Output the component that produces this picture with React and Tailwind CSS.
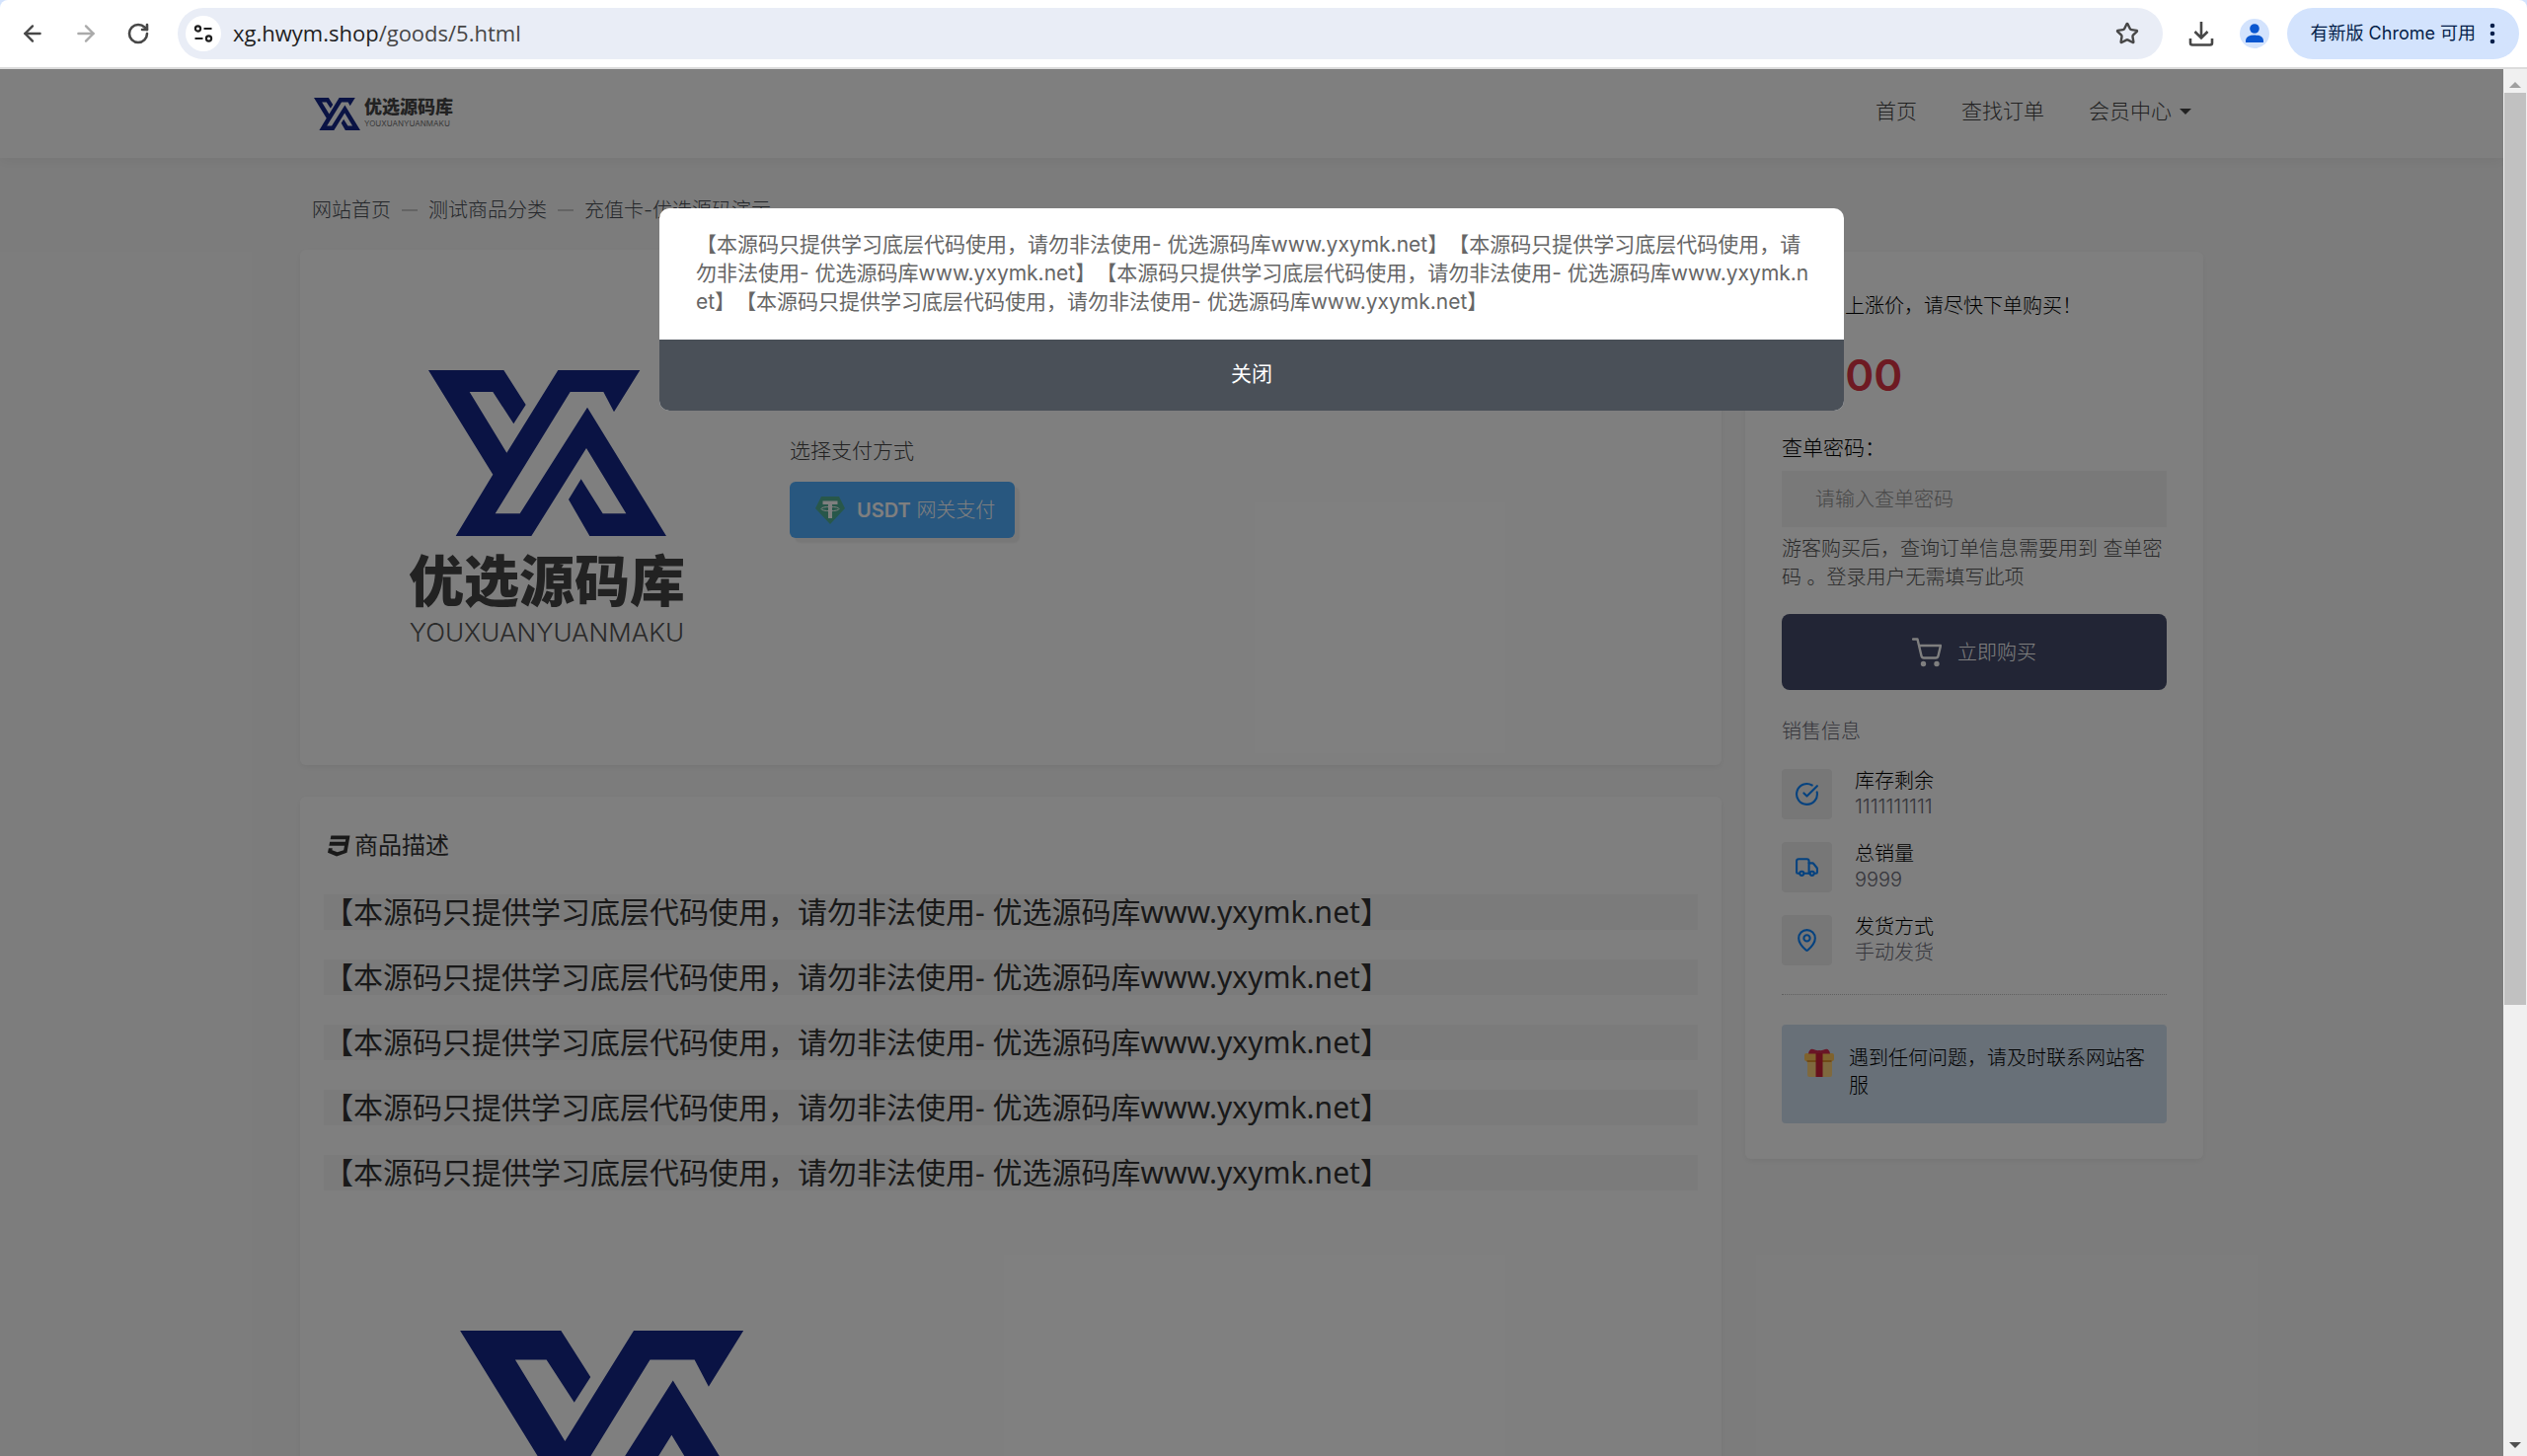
import React, { useState } from 'react';
import { ArrowLeft, ArrowRight, RotateCw, Star, MapPin, Truck, CircleCheckBig } from 'lucide-react';
import { FaCss3 } from 'react-icons/fa';

const NOTICE = '【本源码只提供学习底层代码使用，请勿非法使用- 优选源码库www.yxymk.net】';

const SALES = [
    { title: '库存剩余', value: '1111111111', icon: CircleCheckBig },
    { title: '总销量', value: '9999', icon: Truck },
    { title: '发货方式', value: '手动发货', icon: MapPin },
];

const LogoMark = ({ className }) => (
    <svg viewBox="0 0 723 504" className={className} fill="#142688" aria-hidden="true">
        <path d="M0 0H229L296 105L259 163L196 66H125L238 251L394 0H643L564 127L532 66H431L203 436H278L483 113L723 504H490L426 393L464 331L530 436H601L480 237L313 504H83L196 317Z" />
    </svg>
);

const TetherIcon = () => (
    <svg viewBox="0 0 30 28" className="w-[30px] h-7" aria-hidden="true">
        <path d="M6 0H24L30 12L15 28L0 12Z" fill="#50af95" />
        <path d="M7.500 4.500H22.500V8H17V22H13V8H7.500Z" fill="#fff" />
        <ellipse cx="15" cy="12.500" rx="9" ry="2.200" fill="none" stroke="#fff" strokeWidth="1" />
    </svg>
);

const CartIcon = () => (
    <svg viewBox="0 0 30 30" className="w-[30px] h-[30px]" fill="none" stroke="currentColor" strokeWidth="2.400" strokeLinecap="round" strokeLinejoin="round" aria-hidden="true">
        <path d="M1 1.500H5.500L9.500 18.500Q10 20.500 12 20.500H24Q26 20.500 26.500 18.500L29 8H7" />
        <circle cx="11.500" cy="26.500" r="1.500" fill="currentColor" />
        <circle cx="25" cy="26.500" r="1.500" fill="currentColor" />
    </svg>
);

const GiftIcon = () => (
    <svg viewBox="0 0 30 30" className="w-[30px] h-[30px] shrink-0 mt-1" aria-hidden="true">
        <rect x="3" y="12" width="25" height="17" rx="2" fill="#ffd37c" />
        <rect x="0" y="5" width="30" height="8" rx="2" fill="#ffc45a" />
        <path d="M2.500 12H27.500V14H2.500Z" fill="#e0962f" />
        <path d="M4 5.500Q5 0 9 1Q12 2.500 15 2Q18 2.500 21 1Q25 0 26 5.500Z" fill="#d32a4c" />
        <rect x="11.500" y="5" width="7" height="24" fill="#cf2038" />
    </svg>
);

const BrowserBar = () => (
    <div className="bg-[#d3e3fd] shrink-0">
        <div className="flex items-center h-[70px] bg-white rounded-t-lg border-b-2 border-[#dcdcdc] pl-5 pr-2 text-[#474747]">
            <button type="button" aria-label="后退" className="w-[54px]"><ArrowLeft className="w-[26px] h-[26px]" strokeWidth={2.2} /></button>
            <button type="button" aria-label="前进" className="w-[54px] text-[#aaaaaa]"><ArrowRight className="w-[26px] h-[26px]" strokeWidth={2.2} /></button>
            <button type="button" aria-label="重新加载" className="w-[52px]"><RotateCw className="w-6 h-6" strokeWidth={2.6} /></button>
            <div className="flex flex-1 items-center h-[52px] rounded-full bg-[#e9edf6] pl-2 pr-6">
                <button type="button" aria-label="网站信息" className="w-9 h-9 rounded-full bg-white flex items-center justify-center">
                    <svg viewBox="0 0 20 20" className="w-5 h-5" fill="none" stroke="#1f1f1f" strokeWidth="2.200" aria-hidden="true">
                        <circle cx="4.500" cy="5" r="2.600" />
                        <path d="M10.500 5H18.500M1.500 15H9.500" />
                        <circle cx="15.500" cy="15" r="2.600" />
                    </svg>
                </button>
                <p className="flex-1 pl-3 pb-[2px] text-[22px] text-[#474747] font-['Open_Sans','Noto_Sans_CJK_SC',sans-serif]">
                    <span className="text-[#1f1f1f]">xg.hwym.shop</span>/goods/5.html
                </p>
                <button type="button" aria-label="收藏"><Star className="w-6 h-6" strokeWidth={2.4} /></button>
            </div>
            <button type="button" aria-label="下载" className="ml-[26px]">
                <svg viewBox="0 0 26 26" className="w-[26px] h-[26px]" fill="none" stroke="currentColor" strokeWidth="2.600" aria-hidden="true">
                    <path d="M13 1V17M6.500 11L13 17.500L19.500 11M2 18V22.500Q2 24.500 4 24.500H22Q24 24.500 24 22.500V18" />
                </svg>
            </button>
            <button type="button" aria-label="用户" className="ml-[26px] mr-[18px] w-[30px] h-[30px] rounded-full bg-[#d3e3fd]">
                <svg viewBox="0 0 30 30" className="w-full" fill="#0b57d0" aria-hidden="true">
                    <circle cx="15" cy="10" r="4.800" />
                    <path d="M6 24V21.500Q7 16.500 15 16.500Q23 16.500 24 21.500V24Z" />
                </svg>
            </button>
            <button type="button" className="flex items-center h-[52px] rounded-full bg-[#d3e3fd] text-[#041e49] text-lg pl-6 pr-6">
                有新版 Chrome 可用
                <svg viewBox="0 0 6 22" className="w-[6px] h-[22px] ml-[14px]" fill="currentColor" aria-hidden="true">
                    <circle cx="3" cy="3" r="2.300" /><circle cx="3" cy="11" r="2.300" /><circle cx="3" cy="19" r="2.300" />
                </svg>
            </button>
        </div>
    </div>
);

const Scrollbar = () => (
    <div className="flex flex-col items-center w-6 shrink-0 bg-[#f0f0f0] py-2" aria-hidden="true">
        <svg viewBox="0 0 12 6" className="w-3 h-4" fill="#a0a0a0"><path d="M0 6L6 0L12 6Z" /></svg>
        <div className="w-[22px] h-[66.5%] bg-[#c1c1c1]" />
        <svg viewBox="0 0 12 6" className="w-3 h-[6px] mt-auto" fill="#505050"><path d="M0 0L6 6L12 0Z" /></svg>
    </div>
);

const SiteHeader = () => (
    <header className="bg-white shadow-[0_4px_12px_rgba(0,0,0,0.05)]">
        <div className="max-w-[1928px] mx-auto h-[90px] px-3 flex items-center justify-between">
            <a href="#home" className="flex items-center gap-1 pl-[2px]">
                <LogoMark className="w-[47px] h-[33px]" />
                <span className="flex flex-col text-[#444]">
                    <span className="text-lg leading-5 font-black">优选源码库</span>
                    <span className="text-[8px] leading-3 font-normal text-[#777]">YOUXUANYUANMAKU</span>
                </span>
            </a>
            <nav className="flex items-center gap-[45px] pb-1 text-[21px] text-[#444]">
                <a href="#home">首页</a>
                <a href="#search">查找订单</a>
                <a href="#member" className="flex items-center gap-2">
                    会员中心
                    <svg viewBox="0 0 12 6" className="w-3 h-[6px]" fill="#444" aria-hidden="true"><path d="M0 0L6 6L12 0Z" /></svg>
                </a>
            </nav>
        </div>
    </header>
);

const ProductCard = () => (
    <section className="flex h-[522px] bg-white rounded-md shadow-[0_2px_6px_rgba(0,0,0,0.06)]">
        <div className="w-[496px] pl-1 flex flex-col items-center justify-center">
            <LogoMark className="w-[241px] h-[168px]" />
            <p className="text-[56px] leading-[64px] mt-[14px] font-black text-[#444]">优选源码库</p>
            <p className="text-[26px] leading-6 mt-2 font-light text-[#555] font-['Inter',sans-serif]">YOUXUANYUANMAKU</p>
        </div>
        <div className="pt-[189px]">
            <p className="text-[21px] leading-[30px] text-[#444]">选择支付方式</p>
            <button type="button" className="mt-4 flex items-center h-[57px] pl-[26px] pr-5 rounded-md bg-[#50aeff] text-white text-xl shadow-[5px_5px_2px_#f0f0f0]">
                <TetherIcon />
                <span className="ml-3"><span className="font-semibold">USDT</span> 网关支付</span>
            </button>
        </div>
    </section>
);

const DescriptionCard = () => (
    <section className="mt-8 bg-white rounded-md shadow-[0_2px_6px_rgba(0,0,0,0.06)] px-6 pt-8 pb-9">
        <h2 className="flex items-center gap-[3px] pl-1 text-2xl leading-9 font-normal text-[#333]">
            <FaCss3 className="w-6 h-6" />
            商品描述
        </h2>
        <div className="mt-[31px] flex flex-col gap-[30px]">
            {[1, 2, 3, 4, 5].map(n => (
                <p key={n} className="bg-[#f7f7f7] text-[30px] leading-9 font-normal text-[#333] font-['Noto_Sans','Noto_Sans_CJK_SC',sans-serif]">{NOTICE}</p>
            ))}
        </div>
        <div className="mt-[142px] pl-[138px]">
            <LogoMark className="w-[323px] h-[225px]" />
        </div>
    </section>
);

const OrderCard = () => {
    const [password, setPassword] = useState('');

    return (
        <aside className="w-[464px] mt-[2px] bg-white rounded-md shadow-[0_2px_6px_rgba(0,0,0,0.06)] px-[37px] pt-10 pb-9">
            <p className="text-xl leading-[30px] text-black pl-1">商品马上涨价，请尽快下单购买！</p>
            <p className="mt-[30px] text-[44px] leading-[50px] font-semibold text-[#dc3545] pl-2 font-['Inter',sans-serif]">¥1.00</p>
            <form>
                <label htmlFor="password" className="block mt-[34px] text-[21px] leading-[30px] text-black">查单密码：</label>
                <input
                    id="password"
                    type="text"
                    className="mt-2 w-full h-[57px] px-[34px] bg-[#f2f2f2] text-xl placeholder:text-[#909090] outline-none"
                    placeholder="请输入查单密码"
                    value={password}
                    onChange={(e) => setPassword(e.target.value)}
                />
                <p className="mt-2 text-xl leading-[29px] text-[#555]">游客购买后，查询订单信息需要用到 查单密码 。登录用户无需填写此项</p>
                <button type="button" className="mt-[22px] w-full h-[77px] rounded-lg bg-[#444a6a] text-white text-xl flex items-center justify-center gap-4">
                    <CartIcon />
                    立即购买
                </button>
            </form>
            <h3 className="mt-[27px] text-xl leading-[30px] text-[#6c6c78]">销售信息</h3>
            <ul className="mt-[22px] flex flex-col gap-[22px]">
                {SALES.map(({ title, value, icon: Icon }) => (
                    <li key={title} className="flex items-center gap-[23px]">
                        <span className="w-[51px] h-[51px] rounded-sm bg-[#eeeeee] flex items-center justify-center">
                            <Icon className="w-[25px] h-[25px] text-[#0b84ff]" />
                        </span>
                        <span className="flex flex-col text-xl leading-[26px]">
                            <span className="text-black">{title}</span>
                            <span className="text-[#6c6c78]">{value}</span>
                        </span>
                    </li>
                ))}
            </ul>
            <div className="mt-[29px] pt-[30px] border-t border-dotted border-[#c0c0c0]">
                <div className="flex gap-[15px] h-[100px] rounded bg-[#d0e0f0] pl-[23px] pr-5 pt-5">
                    <GiftIcon />
                    <p className="text-xl leading-[28px] text-black">遇到任何问题，请及时联系网站客服</p>
                </div>
            </div>
        </aside>
    );
};

const NoticeModal = ({ onClose }) => (
    <div role="dialog" aria-modal="true" className="absolute left-1/2 top-[141px] -translate-x-1/2 w-[1200px] rounded-[10px] overflow-hidden bg-white">
        <p className="pl-[37px] pr-8 pt-[22px] pb-6 text-[21px] leading-[29px] font-normal text-[#666] break-all">
            {NOTICE}{NOTICE}{NOTICE}{NOTICE}
        </p>
        <button type="button" onClick={onClose} className="w-full h-[72px] pb-[2px] bg-[#4a5058] text-white text-[21px] font-normal">关闭</button>
    </div>
);

const App = () => {
    const [open, setOpen] = useState(true);

    return (
        <div className="h-screen flex flex-col overflow-hidden [text-spacing-trim:space-all] font-['Inter','Noto_Sans_CJK_SC',sans-serif]">
            <BrowserBar />
            <div className="flex flex-1 min-h-0">
                <div className="relative flex-1 overflow-hidden bg-[#f9f9f9] font-light">
                    <SiteHeader />
                    <main className="max-w-[1928px] mx-auto">
                        <nav className="flex items-center gap-[11px] px-3 pt-[38px] pb-[25px] text-xl leading-[30px] text-[#484d54]">
                            <a href="#home">网站首页</a>
                            <span className="w-4 border-t-2 border-[#c8c8c8]" />
                            <a href="#category">测试商品分类</a>
                            <span className="w-4 border-t-2 border-[#c8c8c8]" />
                            <span>充值卡-优选源码演示</span>
                        </nav>
                        <div className="flex items-start gap-6">
                            <div className="flex-1">
                                <ProductCard />
                                <DescriptionCard />
                            </div>
                            <OrderCard />
                        </div>
                    </main>
                    {open && (
                        <>
                            <div className="absolute inset-0 bg-black/50" />
                            <NoticeModal onClose={() => setOpen(false)} />
                        </>
                    )}
                </div>
                <Scrollbar />
            </div>
        </div>
    );
};

export default App;
